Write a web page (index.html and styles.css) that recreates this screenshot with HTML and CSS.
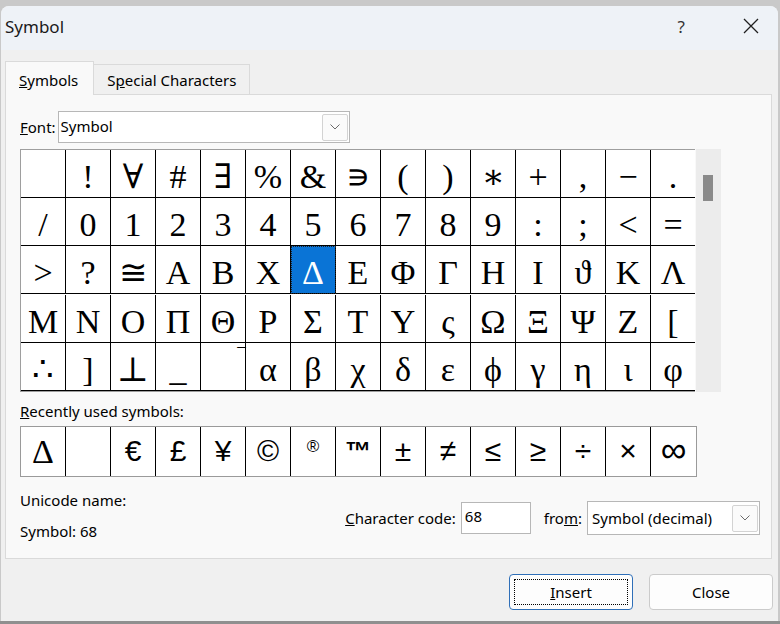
FILE: index.html
```html
<!DOCTYPE html>
<html lang="en">
<head>
    <meta charset="UTF-8">
    <title>Symbol</title>
    <link rel="stylesheet" href="styles.css">
</head>
<body>

    <div class="window">
        <div class="titlebar">
            <span class="title">Symbol</span>
            <span class="help">?</span>
            <svg class="close-x" width="16" height="16" viewBox="0 0 16 16">
                <path d="M1 1 L15 15 M15 1 L1 15" stroke="#1f1f1f" stroke-width="1.3" fill="none"/>
            </svg>
        </div>

        <div class="tabs">
            <div class="tab active"><u>S</u>ymbols</div>
            <div class="tab">S<u>p</u>ecial Characters</div>
        </div>

        <div class="panel">
            <div class="font-row">
                <label><u>F</u>ont:</label>
                <div class="select font-select">
                    <span>Symbol</span>
                    <div class="drop">
                        <svg width="10" height="6" viewBox="0 0 10 6"><path d="M0.5 0.5 L5 5 L9.5 0.5" stroke="#6b6b6b" fill="none"/></svg>
                    </div>
                </div>
            </div>

            <div class="chars-row">
                <div class="chars">
                    <span></span><span>!</span><span>∀</span><span>#</span><span>∃</span><span>%</span><span>&amp;</span><span>∍</span><span>(</span><span>)</span><span>∗</span><span>+</span><span>,</span><span>−</span><span>.</span>
                    <span>/</span><span>0</span><span>1</span><span>2</span><span>3</span><span>4</span><span>5</span><span>6</span><span>7</span><span>8</span><span>9</span><span>:</span><span>;</span><span>&lt;</span><span>=</span>
                    <span>&gt;</span><span>?</span><span>≅</span><span>Α</span><span>Β</span><span>Χ</span><span class="selected">Δ</span><span>Ε</span><span>Φ</span><span>Γ</span><span>Η</span><span>Ι</span><span>ϑ</span><span>Κ</span><span>Λ</span>
                    <span>Μ</span><span>Ν</span><span>Ο</span><span>Π</span><span>Θ</span><span>Ρ</span><span>Σ</span><span>Τ</span><span>Υ</span><span>ς</span><span>Ω</span><span>Ξ</span><span>Ψ</span><span>Ζ</span><span>[</span>
                    <span>∴</span><span>]</span><span>⊥</span><span>_</span><span class="over">‾</span><span>α</span><span>β</span><span>χ</span><span>δ</span><span>ε</span><span>ϕ</span><span>γ</span><span>η</span><span>ι</span><span>φ</span>
                </div>
                <div class="scrollbar"><div class="thumb"></div></div>
            </div>

            <div class="recent-label"><u>R</u>ecently used symbols:</div>
            <div class="recent">
                <span class="serif">Δ</span><span></span><span>€</span><span>£</span><span>¥</span><span>©</span><span class="small">®</span><span class="tm">™</span><span>±</span><span>≠</span><span>≤</span><span>≥</span><span>÷</span><span>×</span><span class="inf">∞</span>
            </div>

            <div class="info">
                <div class="info-left">
                    <div>Unicode name:</div>
                    <div>Symbol: 68</div>
                </div>
                <div class="info-right">
                    <label><u>C</u>haracter code:</label>
                    <div class="code-input">68</div>
                    <label class="from">fro<u>m</u>:</label>
                    <div class="select from-select">
                        <span>Symbol (decimal)</span>
                        <div class="drop">
                            <svg width="10" height="6" viewBox="0 0 10 6"><path d="M0.5 0.5 L5 5 L9.5 0.5" stroke="#6b6b6b" fill="none"/></svg>
                        </div>
                    </div>
                </div>
            </div>
        </div>

        <div class="buttons">
            <button class="btn primary"><span class="focus"><u>I</u>nsert</span></button>
            <button class="btn">Close</button>
        </div>
    </div>
    <div class="desk-bottom"></div>

</body>
</html>
```

FILE: styles.css
```css
body {
    margin: 0;
    background-color: #c9c9c9;
    font-family: "Noto Sans", "Open Sans", sans-serif;
    font-size: 15px;
    color: #000;
    height: 624px;
    overflow: hidden;
}

/* Dialog window */
.window {
    margin: 6px 2px 0 1px;
    height: 615px;
    background-color: #f0f0f0;
    border-radius: 8px 8px 0 0;
    overflow: hidden;
}

.desk-bottom {
    height: 3px;
    background-color: #8f8f8f;
}

.titlebar {
    height: 44px;
    background-color: #eef2f7;
    display: flex;
    align-items: center;
    padding: 0 0 4px 4px;
    box-sizing: border-box;
}

.title {
    font-size: 17px;
    color: #1a1a1a;
    flex: 1;
}

.help {
    font-size: 17px;
    color: #333;
    margin-right: 58px;
}

.close-x {
    margin-right: 19px;
}

/* Tabs */
.tabs {
    display: flex;
    align-items: flex-end;
    height: 44px;
    padding-left: 4px;
}

.tab {
    height: 30px;
    line-height: 30px;
    padding: 0 13px;
    background-color: #f0f0f0;
    border: 1px solid #dadada;
    border-left: none;
    border-bottom: none;
    box-sizing: border-box;
}

.tab.active {
    height: 34px;
    line-height: 36px;
    background-color: #f9f9f9;
    border-left: 1px solid #dadada;
    padding: 0 15px 0 13px;
    margin-bottom: -1px;
    position: relative;
}

/* Tab panel */
.panel {
    margin: 0 6px 0 4px;
    height: 465px;
    box-sizing: border-box;
    background-color: #f9f9f9;
    border: 1px solid #dadada;
    padding: 16px 0 0 14px;
}

.font-row {
    display: flex;
    align-items: center;
    gap: 2px;
}

.select {
    display: flex;
    align-items: center;
    background-color: #fff;
    border: 1px solid #b7b7b7;
    box-sizing: border-box;
}

.select span {
    flex: 1;
}

.drop {
    width: 26px;
    height: 27px;
    box-sizing: border-box;
    border: 1px solid #d3d3d3;
    border-radius: 2px;
    background-color: #fbfbfb;
    display: flex;
    align-items: center;
    justify-content: center;
    margin-right: 1px;
}

.font-select {
    width: 292px;
    height: 32px;
    padding-left: 2px;
}

.font-select span {
    margin-top: -3px;
}

/* Character grid */
.chars-row {
    display: flex;
    margin-top: 6px;
}

.chars {
    display: grid;
    grid-template-columns: repeat(14, 45px) 44px;
    background-color: #fff;
    border-top: 1px solid #9e9e9e;
    border-left: 1px solid #9e9e9e;
    border-bottom: 1px solid #9e9e9e;
    font-family: "Liberation Serif", "DejaVu Serif", serif;
    font-size: 34px;
}

.chars span {
    height: 48px;
    box-sizing: border-box;
    border-right: 1px solid #000;
    border-bottom: 1px solid #000;
    text-align: center;
    line-height: 34px;
    padding-top: 10px;
    overflow: hidden;
}

.chars span:nth-child(15n) {
    border-right: none;
}

.chars .selected {
    background-color: #0a74d6;
    color: #fff;
    outline: 1px dotted #222;
    outline-offset: -1px;
}

.chars .over {
    font-size: 22px;
    line-height: 22px;
    padding: 3px 0 0 0;
    text-align: right;
    overflow: visible;
}

.scrollbar {
    width: 25px;
    height: 243px;
    margin-left: 1px;
    background-color: #ececec;
}

.thumb {
    width: 10px;
    height: 26px;
    margin: 26px 0 0 7px;
    background-color: #8a8a8a;
}

/* Recently used */
.recent-label {
    margin-top: 9px;
    line-height: 20px;
}

.recent {
    display: grid;
    grid-template-columns: repeat(15, 45px);
    width: 675px;
    margin-top: 5px;
    background-color: #fff;
    border: 1px solid #9a9a9a;
    font-family: "Liberation Sans", "DejaVu Sans", sans-serif;
    font-size: 30px;
}

.recent span {
    height: 49px;
    box-sizing: border-box;
    border-right: 1px solid #000;
    text-align: center;
    line-height: 30px;
    padding-top: 9px;
}

.recent span:last-child {
    border-right: none;
}

.recent .serif {
    font-family: "Liberation Serif", serif;
    font-size: 34px;
    line-height: 34px;
    padding-top: 8px;
}

.recent .small {
    font-size: 17px;
    line-height: 17px;
    padding-top: 11px;
}

.recent .tm {
    font-size: 26px;
    font-weight: bold;
}

.recent .inf {
    font-size: 36px;
    line-height: 30px;
    padding-top: 8px;
}

/* Info row */
.info {
    display: flex;
    margin-top: 13px;
}

.info-left {
    display: flex;
    flex-direction: column;
    gap: 11px;
    line-height: 20px;
}

.info-right {
    margin-left: auto;
    margin-right: 11px;
    padding-top: 11px;
    display: flex;
    align-items: center;
    height: 34px;
}

.code-input {
    width: 70px;
    height: 32px;
    box-sizing: border-box;
    background-color: #fff;
    border: 1px solid #b7b7b7;
    padding: 1px 0 0 3px;
    line-height: 24px;
    margin-left: 5px;
}

.from {
    margin-left: 13px;
    margin-right: 5px;
}

.from-select {
    width: 173px;
    height: 34px;
    padding-left: 4px;
}

/* Buttons */
.buttons {
    display: flex;
    justify-content: flex-end;
    gap: 16px;
    padding: 15px 5px 0 0;
}

.btn {
    width: 124px;
    height: 36px;
    background-color: #fdfdfd;
    border: 1px solid #cbcbcb;
    border-radius: 4px;
    font-family: "Noto Sans", "Open Sans", sans-serif;
    font-size: 15px;
    color: #000;
    padding: 0;
}

.btn.primary {
    border-color: #2f6fb8;
    padding: 4px;
}

.btn .focus {
    display: block;
    height: 100%;
    box-sizing: border-box;
    border: 1px dotted #000;
    line-height: 24px;
}
```
